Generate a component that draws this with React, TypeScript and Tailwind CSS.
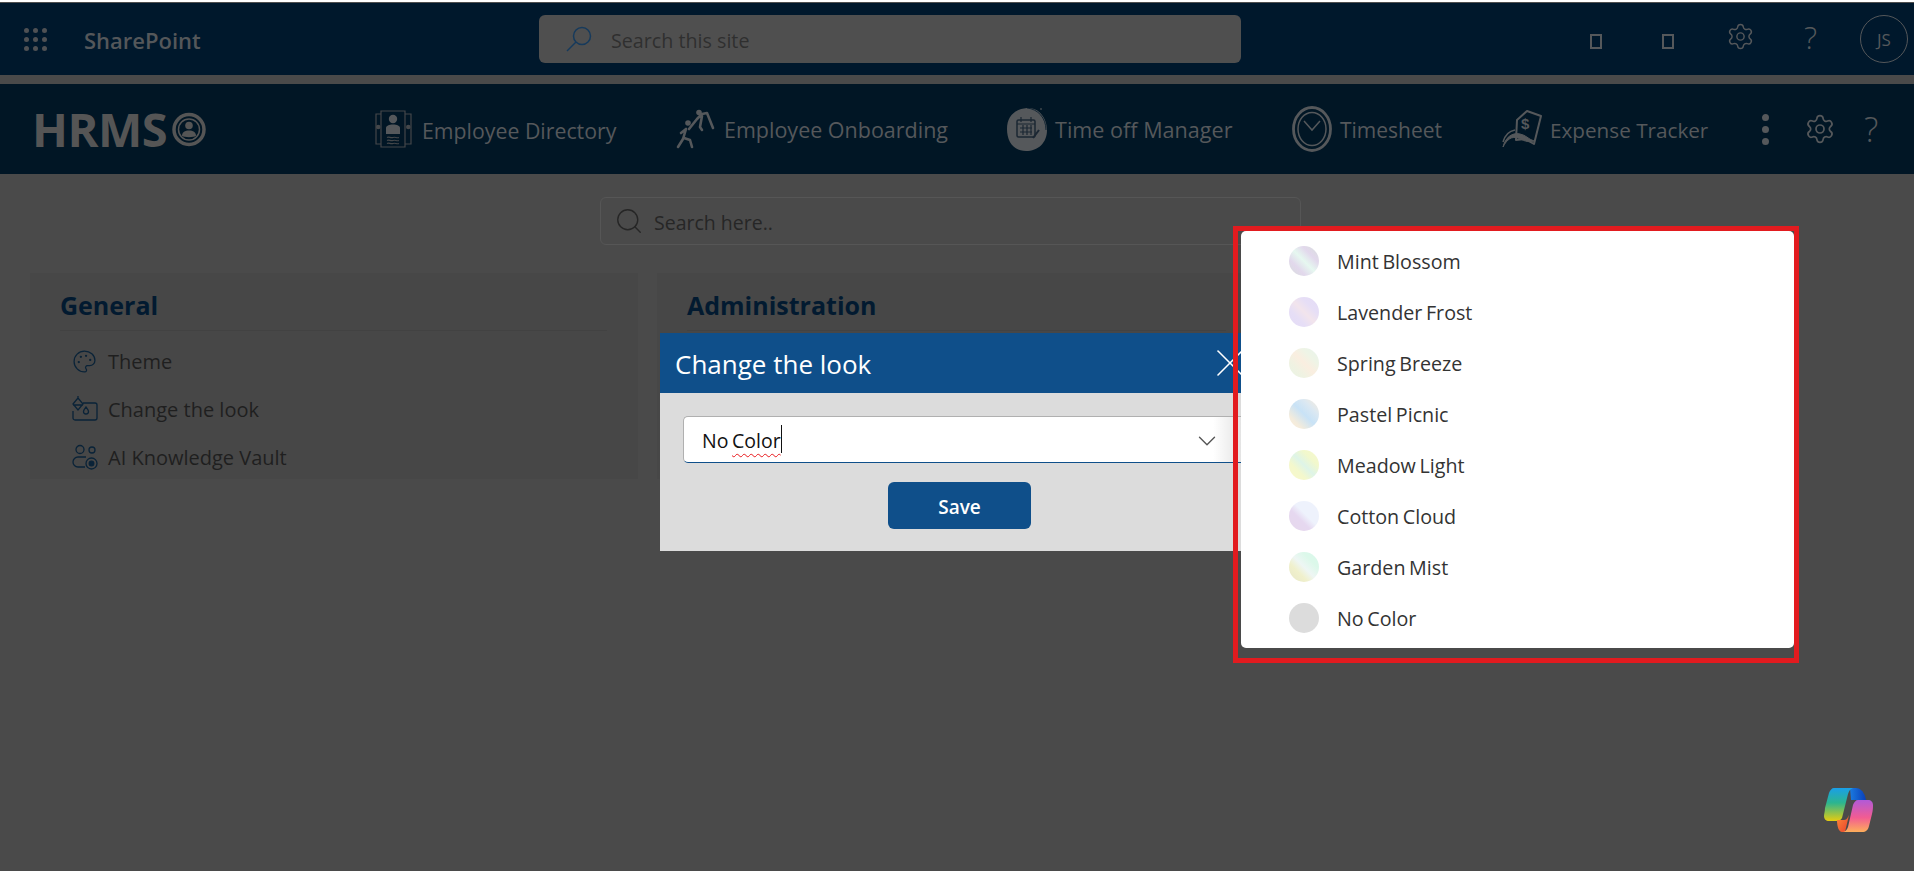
import React from "react";
import { Search, X, ChevronDown, Settings, MoreVertical, Palette } from "lucide-react";

const FONT = "font-['Open_Sans','Noto_Sans',sans-serif]";

const swatches: [string, string][] = [
  ["Mint Blossom", "linear-gradient(45deg,#d8dfdc 0%,#e2d8ec 28%,#e6f8f0 50%,#e2d8ec 72%,#d8e0dc 100%)"],
  ["Lavender Frost", "linear-gradient(45deg,#e4dcf6 0%,#e6def6 30%,#f2e4ec 50%,#e6def6 70%,#e4dcf6 100%)"],
  ["Spring Breeze", "linear-gradient(45deg,#e8f4e4 0%,#f0f2e2 30%,#faeee0 50%,#eef4e6 72%,#e8f4ec 100%)"],
  ["Pastel Picnic", "linear-gradient(45deg,#fbeedd 0%,#f4ecdc 22%,#c8e2f6 50%,#dbe8f2 72%,#f8ecdc 100%)"],
  ["Meadow Light", "linear-gradient(45deg,#f8f8cc 0%,#f4f8cc 30%,#def4e8 50%,#f2f8cc 72%,#f6f8d0 100%)"],
  ["Cotton Cloud", "linear-gradient(45deg,#e6d8ec 0%,#e6d8f0 38%,#eef2fc 55%,#eef2fc 100%)"],
  ["Garden Mist", "linear-gradient(45deg,#e8e8c8 0%,#f0f0cc 32%,#eef6f4 50%,#dcf8ea 72%,#d8f8ea 100%)"],
  ["No Color", "linear-gradient(#dcdcdc,#dcdcdc)"],
];

function Waffle() {
  return (
    <svg width="23" height="23" viewBox="0 0 23 23" fill="#4f5154">
      {[2.5, 11.5, 20.5].flatMap((y) =>
        [2.5, 11.5, 20.5].map((x) => <circle key={`${x}-${y}`} cx={x} cy={y} r="2.5" />)
      )}
    </svg>
  );
}

function DirectoryIcon() {
  return (
    <svg width="37" height="40" viewBox="0 0 37 40" fill="none" stroke="#44474a" strokeWidth="1.2">
      <path d="M6 2h24v36H6z" />
      <path d="M6 5H1v30h5M30 5h6v30h-6" />
      <circle cx="18" cy="10" r="4.200" fill="#55585b" stroke="none" />
      <path d="M11 25v-6c0-2 3-3.500 7-3.500s7 1.500 7 3.500v6z" fill="#55585b" stroke="none" />
      <path d="M12 28.500c2-1.500 3.500 1 6 0s3.500 1 6 0M12 31.500c2-1.500 3.500 1 6 0s3.500 1 6 0M12 34.500c2-1.500 3.500 1 6 0s3.500 1 6 0" />
      <circle cx="3.200" cy="18" r="2.300" fill="#44474a" stroke="none" />
      <circle cx="33.300" cy="18" r="2.300" fill="#44474a" stroke="none" />
    </svg>
  );
}

function OnboardingIcon() {
  return (
    <svg width="39" height="40" viewBox="0 0 39 40" fill="none" stroke="#55585b" strokeLinecap="round" strokeLinejoin="round">
      <circle cx="23" cy="3.500" r="2.800" fill="#55585b" stroke="none" />
      <circle cx="12" cy="14" r="2.800" fill="#55585b" stroke="none" />
      <path d="M13 20l8-10 5-5 5-1 6 15M26 7l-2 11 2 3" strokeWidth="2.600" />
      <path d="M10 20L7 30l-5 8M8 29l6 2 2 7M10 20l-5 4" strokeWidth="2.600" />
    </svg>
  );
}

function TimeOffIcon() {
  return (
    <svg width="43" height="46" viewBox="0 0 43 46">
      <path d="M22 2C33 1 42 11 42 24S33 45 21 45C9 45 2 36 2 23S10 3 22 2z" fill="#55585b" />
      <path d="M22 2C33 3 41 12 41 24" fill="none" stroke="#011829" strokeWidth="0.800" />
      <circle cx="36" cy="3" r="0.800" fill="#666" />
      <rect x="12" y="14" width="18" height="17" rx="1.500" fill="none" stroke="#1b2733" strokeWidth="1.500" />
      <path d="M12 18h18M16 11v5M26 11v5M15 22h12M15 26h12M18 19v10M22 19v10M26 19v10" stroke="#1b2733" strokeWidth="1.200" />
      <path d="M28 32l6-8" stroke="#1b2733" strokeWidth="2" />
    </svg>
  );
}

function WatchIcon() {
  return (
    <svg width="40" height="46" viewBox="0 0 40 46" fill="none" stroke="#55585b">
      <ellipse cx="20" cy="23" rx="18.500" ry="21.500" strokeWidth="2.800" />
      <ellipse cx="20" cy="23" rx="14" ry="16.500" strokeWidth="1.500" />
      <path d="M12 15l8 9 8-9" strokeWidth="1.500" />
    </svg>
  );
}

function ExpenseIcon() {
  return (
    <svg width="40" height="40" viewBox="0 0 40 40" fill="none" stroke="#55585b" strokeLinejoin="round">
      <path d="M15 11L25 2l14 5-7 28-9-5-9 1z" strokeWidth="2" fill="#011625" />
      <text x="19" y="20" fontSize="15" fontWeight="700" fill="#55585b" stroke="none" fontFamily="Liberation Sans, sans-serif">$</text>
      <path d="M1 38c2-9 9-15 17-13 6 1 8 5 14 7-7 2-11-1-16-3-6-2-11 1-15 9z" fill="#55585b" strokeWidth="1" />
      <path d="M1 33C3 26 7 22 13 21" strokeWidth="1.500" />
    </svg>
  );
}

function HrmsLogo() {
  return (
    <svg width="34" height="35" viewBox="0 0 34 35" fill="none">
      <circle cx="17" cy="17.500" r="15" stroke="#555555" strokeWidth="3.500" />
      <circle cx="17" cy="17.500" r="10.500" stroke="#555555" strokeWidth="1.500" />
      <circle cx="17" cy="13.500" r="3.800" fill="#555555" />
      <path d="M10 24c0-4 3-5.500 7-5.500s7 1.500 7 5.500c-2 1.500-12 1.500-14 0z" fill="#555555" />
    </svg>
  );
}

function CopilotIcon() {
  return (
    <svg width="49" height="46" viewBox="0 0 49 46">
      <defs>
        <linearGradient id="cpA" x1="0" y1="0" x2="0" y2="1">
          <stop offset="0" stopColor="#1a9fe8" />
          <stop offset="0.45" stopColor="#2cb58f" />
          <stop offset="1" stopColor="#e6cc10" />
        </linearGradient>
        <linearGradient id="cpB" x1="0" y1="0" x2="0" y2="1">
          <stop offset="0" stopColor="#b15ad8" />
          <stop offset="0.55" stopColor="#f25c92" />
          <stop offset="1" stopColor="#fdae5a" />
        </linearGradient>
        <linearGradient id="cpC" x1="0" y1="0" x2="1" y2="0">
          <stop offset="0" stopColor="#1a7ae0" />
          <stop offset="1" stopColor="#0a3fb8" />
        </linearGradient>
        <linearGradient id="cpD" x1="0" y1="0" x2="1" y2="1">
          <stop offset="0" stopColor="#fb8a3a" />
          <stop offset="1" stopColor="#e8402c" />
        </linearGradient>
      </defs>
      <path d="M26 1h6c4 0 7 3 9 8l1 4H27z" fill="url(#cpC)" />
      <path d="M10 1h19c-3 1-4 3-5 6l-6 24c-1 2-3 3-5 3H5c-3 0-5-2-5-5 0-2 1-5 1-8L5 6c1-3 3-5 5-5z" fill="url(#cpA)" />
      <path d="M13 33h7c2 0 3-1 4-3l1-2-4 17h-3c-3 0-5-5-5-12z" fill="url(#cpD)" />
      <path d="M34 13h10c3 0 5 2 5 5 0 2 0 5-1 9l-3 12c-1 4-3 6-7 6H18c3 0 5-2 6-5l5-22c1-3 3-5 5-5z" fill="url(#cpB)" />
    </svg>
  );
}

function TopBar() {
  return (
    <div className="h-[72px] bg-[#00182c] flex items-center relative">
      <div className="ml-6 w-[60px] shrink-0"><Waffle /></div>
      <div className="text-[22px] font-semibold text-[#54575a] w-[455px] shrink-0 pt-[3px]">SharePoint</div>
      <div className="w-[702px] h-12 rounded-md bg-[#4f4f4f] flex items-center shrink-0">
        <svg className="ml-[27px] mr-[19px]" width="26" height="26" viewBox="0 0 26 26" fill="none" stroke="#163a5c" strokeWidth="1.500">
          <circle cx="16" cy="10" r="8.500" />
          <path d="M10 16L1 25" />
        </svg>
        <span className="text-[19.700px] text-[#2f2f2f] pt-[3px]">Search this site</span>
      </div>
      <div className="flex items-center ml-[349px]">
        <div className="w-3 h-[15px] border-2 border-[#55585b] mt-[4px]" />
        <div className="w-3 h-[15px] border-2 border-[#55585b] mt-[4px] ml-[60px]" />
        <div className="ml-[52px] -mt-[6px]"><Settings size={29} color="#55585b" strokeWidth={1.200} /></div>
        <div className="ml-[49px] text-[31px] leading-none font-light text-[#55585b] -mt-[4px] w-[22px]">?</div>
        <div className="ml-[34px] w-12 h-12 rounded-full border border-[#54575a] flex items-center justify-center text-[17px] text-[#55585b] pt-[1px]">JS</div>
      </div>
    </div>
  );
}

function NavItem({ icon, label, width, gap, text }: { icon: React.ReactNode; label: string; width: number; gap: number; text: string }) {
  return (
    <div className="flex items-center shrink-0" style={{ width }}>
      <div className="shrink-0 flex items-center" style={{ marginRight: gap }}>{icon}</div>
      <span className={`${text} text-[#55585b] whitespace-nowrap pt-[3px]`}>{label}</span>
    </div>
  );
}

function NavBar() {
  return (
    <div className="h-[90px] bg-[#011625] mt-[9px] flex items-center">
      <div className="ml-[32px] w-[343px] shrink-0 flex items-center">
        <span className="text-[47px] leading-none font-bold text-[#555555] tracking-[-0.5px]">HRMS</span>
        <span className="ml-[5px]"><HrmsLogo /></span>
      </div>
      <NavItem icon={<DirectoryIcon />} label="Employee Directory" width={301} gap={10} text="text-[21.300px]" />
      <NavItem icon={<OnboardingIcon />} label="Employee Onboarding" width={329} gap={9} text="text-[21.500px]" />
      <NavItem icon={<TimeOffIcon />} label="Time off Manager" width={287} gap={7} text="text-[21.600px]" />
      <NavItem icon={<WatchIcon />} label="Timesheet" width={210} gap={8} text="text-[21px]" />
      <NavItem icon={<ExpenseIcon />} label="Expense Tracker" width={250} gap={8} text="text-[20.700px]" />
      <MoreVertical size={41} color="#55585b" strokeWidth={2.100} className="shrink-0 -ml-[7px]" />
      <div className="ml-[18px] shrink-0"><Settings size={32} color="#55585b" strokeWidth={1.300} /></div>
      <div className="ml-[28px] text-[34px] leading-none font-light text-[#55585b]">?</div>
    </div>
  );
}

function Panel({ title, className, children }: { title: string; className: string; children?: React.ReactNode }) {
  return (
    <div className={`bg-[#474747] h-[206px] pt-[16px] ${className}`}>
      <div className="ml-[30px] mr-[31px] h-[42px] border-b border-[#424242] text-[25px] leading-[32px] font-bold text-[#021a30]">{title}</div>
      {children}
    </div>
  );
}

function GeneralItem({ icon, label }: { icon: React.ReactNode; label: string }) {
  return (
    <div className="flex items-center h-12 ml-[42px]">
      <div className="w-[36px] shrink-0">{icon}</div>
      <span className="text-[20px] text-[#1f1f1f] pt-[2px]">{label}</span>
    </div>
  );
}

function LookIcon() {
  return (
    <svg width="26" height="26" viewBox="0 0 26 26" fill="none" stroke="#0a2338" strokeWidth="1.300">
      <path d="M11 7h12a2 2 0 0 1 2 2v13a2 2 0 0 1-2 2H3a2 2 0 0 1-2-2v-7" />
      <path d="M6 2L1 8l5 6 5-6zM1 9h10M6 0v3" />
      <path d="M14 11c1.500 2 2.500 3.300 2.500 4.500a2.500 2.500 0 0 1-5 0c0-1.200 1-2.500 2.500-4.500z" />
    </svg>
  );
}

function VaultIcon() {
  return (
    <svg width="26" height="26" viewBox="0 0 26 26" fill="none" stroke="#0a2338" strokeWidth="1.300">
      <circle cx="8" cy="5.500" r="4" />
      <circle cx="20" cy="6" r="3" />
      <path d="M14 13H6a4.500 4.500 0 0 0 0 10h7" />
      <circle cx="19.500" cy="19.500" r="5.500" />
      <circle cx="19.500" cy="19.500" r="2.300" fill="#0a2338" />
    </svg>
  );
}

function Dialog() {
  return (
    <div className="absolute left-[660px] top-[333px] w-[581px] h-[218px] bg-[#dcdcdc]">
      <div className="h-[60px] bg-[#0f4f8a] flex items-center justify-between pl-[15px] text-white">
        <span className="text-[26px] pt-[2px]">Change the look</span>
        <X size={48} color="#fff" strokeWidth={0.800} className="-mr-[13px] shrink-0" />
      </div>
      <div className="pl-[23px]">
        <div className="mt-[23px] h-[47px] bg-gradient-to-r from-white from-[95%] to-[#e4e4e4] border border-[#b0b0b0] border-b-[#0f4f8a] border-r-0 rounded-l-[5px] flex items-center pl-[18px]">
          <span className="relative text-[19.500px] text-[#111] leading-none pt-[3px] [word-spacing:-1.500px]">
            No{" "}
            <span className="underline decoration-wavy decoration-[#e8181c] decoration-1 underline-offset-[5px]">Color</span>
            <span className="absolute -right-[1px] -top-[3px] w-px h-[28px] bg-[#111]" />
          </span>
          <ChevronDown size={30} color="#555" strokeWidth={1.100} className="ml-auto mr-[19px] mt-[2px]" />
        </div>
        <button className="block mt-[19px] ml-[205px] w-[143px] h-[47px] rounded-md bg-[#0f4f8a] text-white text-[19px] font-semibold pt-[3px]">Save</button>
      </div>
    </div>
  );
}

function Dropdown() {
  return (
    <div className="absolute left-[1233px] top-[226px] w-[566px] h-[437px] border-[5px] border-[#e21b1f] pl-[3px]">
      <div className="w-[553px] h-[417px] bg-white rounded-[5px] flex flex-col pt-[4px]">
        {swatches.map(([name, bg]) => (
          <div key={name} className="h-[51px] flex items-center pl-[48px] shrink-0">
            <span className="w-[30px] h-[30px] rounded-full" style={{ backgroundImage: bg }} />
            <span className="ml-[18px] text-[19.700px] text-[#333] pt-[3px] [word-spacing:-1.500px]">{name}</span>
          </div>
        ))}
      </div>
    </div>
  );
}

export default function App() {
  return (
    <div className={`relative w-[1914px] h-[871px] overflow-hidden bg-[#4a4a4a] ${FONT}`}>
      <div className="h-[2px] bg-white" />
      <div className="h-px bg-[#4f4f4f]" />
      <TopBar />
      <NavBar />
      <div className="h-[23px]" />
      <div className="ml-[600px] w-[701px] h-[48px] border border-[#565656] rounded-md flex items-center pl-[13px]">
        <Search size={30} color="#262626" strokeWidth={1.100} />
        <span className="ml-[10px] text-[19.500px] text-[#262626] pt-[3px]">Search here..</span>
      </div>
      <div className="flex mt-[28px] ml-[30px] gap-[19px]">
        <Panel title="General" className="w-[608px]">
          <div className="pt-[6px]">
            <GeneralItem icon={<Palette size={25} color="#0a2338" strokeWidth={1.200} />} label="Theme" />
            <GeneralItem icon={<LookIcon />} label="Change the look" />
            <GeneralItem icon={<VaultIcon />} label="AI Knowledge Vault" />
          </div>
        </Panel>
        <Panel title="Administration" className="w-[600px]" />
      </div>
      <Dialog />
      <Dropdown />
      <div className="absolute left-[1824px] top-[787px]"><CopilotIcon /></div>
    </div>
  );
}
